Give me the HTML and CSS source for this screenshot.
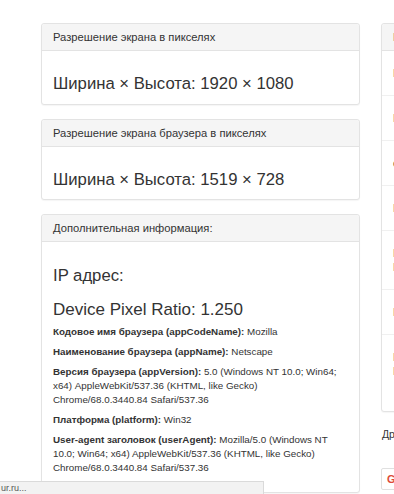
FILE: index.html
```html
<!DOCTYPE html>
<html lang="ru">
<head>
    <meta charset="UTF-8">
    <meta name="viewport" content="width=device-width, initial-scale=1.0">
    <title>Разрешение экрана</title>
    <link rel="stylesheet" href="styles.css">
</head>
<body>
    <div class="page">
        <div class="main-col">
            <div class="panel">
                <div class="panel-heading">Разрешение экрана в пикселях</div>
                <div class="panel-body">
                    <h3 class="value">Ширина × Высота: 1920 × 1080</h3>
                </div>
            </div>

            <div class="panel">
                <div class="panel-heading">Разрешение экрана браузера в пикселях</div>
                <div class="panel-body">
                    <h3 class="value">Ширина × Высота: 1519 × 728</h3>
                </div>
            </div>

            <div class="panel">
                <div class="panel-heading">Дополнительная информация:</div>
                <div class="panel-body">
                    <h3 class="value ip">IP адрес:</h3>
                    <h2 class="ratio">Device Pixel Ratio: 1.250</h2>
                    <p><b>Кодовое имя браузера (appCodeName):</b> Mozilla</p>
                    <p><b>Наименование браузера (appName):</b> Netscape</p>
                    <p><b>Версия браузера (appVersion):</b> 5.0 (Windows NT 10.0; Win64; x64) AppleWebKit/537.36 (KHTML, like Gecko) Chrome/68.0.3440.84 Safari/537.36</p>
                    <p><b>Платформа (platform):</b> Win32</p>
                    <p><b>User-agent заголовок (userAgent):</b> Mozilla/5.0 (Windows NT 10.0; Win64; x64) AppleWebKit/537.36 (KHTML, like Gecko) Chrome/68.0.3440.84 Safari/537.36</p>
                </div>
            </div>
        </div>

        <div class="side-col">
            <div class="panel side-panel">
                <div class="panel-heading">Популярные разрешения</div>
                <ul class="side-list">
                    <li>Разрешение 1366 × 768</li>
                    <li>Разрешение 1920 × 1080</li>
                    <li>смартфоны 360 × 640</li>
                    <li>Разрешение 1280 × 1024</li>
                    <li>Разрешение 1440 × 900<br>Разрешение 1600 × 900</li>
                    <li>Разрешение 1536 × 864</li>
                    <li>Разрешение 1280 × 800<br>Разрешение 1024 × 768</li>
                </ul>
            </div>
            <p class="other">Другие сервисы</p>
            <span class="share-btn">G+</span>
        </div>
    </div>

    <div class="status-bar">ur.ru...</div>
</body>
</html>
```

FILE: styles.css
```css
* {
    margin: 0;
    padding: 0;
    box-sizing: border-box;
}

html, body {
    height: 100%;
    overflow: hidden;
}

body {
    font-family: 'Liberation Sans', Arial, sans-serif;
    color: #333;
    background: #fff;
}

.page {
    display: flex;
    gap: 21px;
    padding: 23px 0 0 41px;
}

.main-col {
    flex: 0 0 319px;
}

.side-col {
    flex: 0 0 260px;
}

.panel {
    background: #fff;
    border: 1px solid #e3e3e3;
    border-radius: 3px;
    box-shadow: 0 1px 1px rgba(0, 0, 0, 0.04);
    margin-bottom: 14px;
}

.panel-heading {
    background: #f5f5f5;
    border-bottom: 1px solid #e3e3e3;
    height: 27px;
    padding: 7px 11px 0;
    font-size: 11.2px;
    line-height: 12.5px;
    border-radius: 3px 3px 0 0;
}

.panel-body {
    padding: 10.5px 11px;
}

.value {
    font-size: 16.7px;
    font-weight: normal;
    line-height: 19px;
    margin-top: 12.5px;
}

.ip {
    margin-top: 13.5px;
}

.ratio {
    font-size: 17px;
    font-weight: normal;
    line-height: 19px;
    margin: 15px 0 6px;
}

.panel-body p {
    font-size: 9.8px;
    line-height: 14px;
    margin-bottom: 6px;
}

.side-list {
    list-style: none;
}

.side-list li {
    font-size: 11px;
    line-height: 14px;
    padding: 15px 11px;
    border-bottom: 1px solid #f0f0f0;
}

.side-list li:last-child {
    border-bottom: none;
    padding-bottom: 33px;
}

.side-panel {
    margin-bottom: 15px;
}

.other {
    font-size: 10.5px;
    line-height: 14px;
    margin-left: 1px;
}

.share-btn {
    display: inline-block;
    margin-top: 27px;
    padding: 3px 5px;
    border: 1px solid #e0e0e0;
    border-radius: 2px;
    color: #dd4b39;
    font-weight: bold;
    font-size: 11px;
    line-height: 14px;
}

.status-bar {
    position: fixed;
    left: 0;
    bottom: 0;
    width: 264px;
    height: 13px;
    background: #f2f2f2;
    border-top: 1px solid #dadada;
    border-right: 1px solid #dadada;
    font-size: 9px;
    line-height: 12px;
    color: #555;
    padding-left: 1px;
}
```
